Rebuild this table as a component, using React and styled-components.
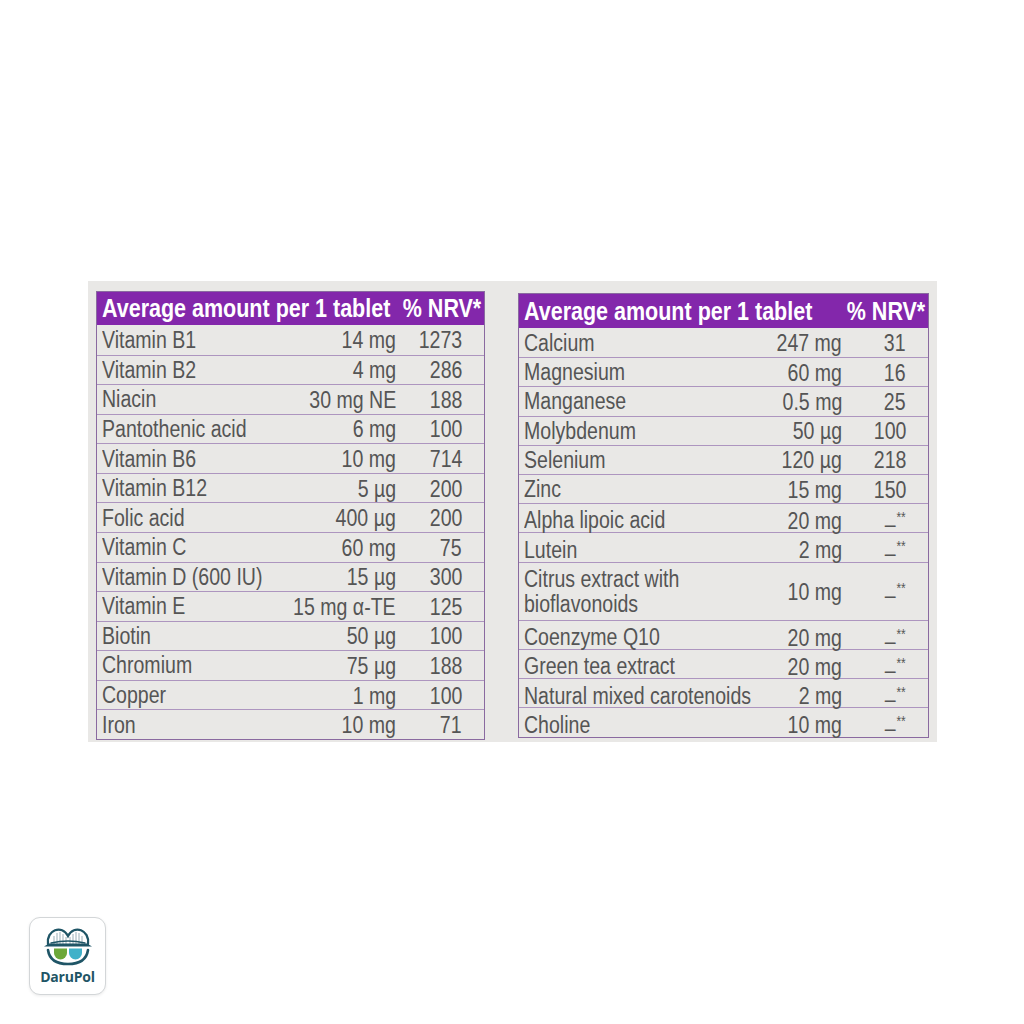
import React from 'react';
import styled, { createGlobalStyle } from 'styled-components';

const GlobalStyle = createGlobalStyle`
	html, body {
		margin: 0;
		padding: 0;
		background: #ffffff;
	}
`;

const colors = {
	panel: '#e9e8e6',
	purple: '#8327ab',
	text: '#555555',
	line: '#ad95bf',
	frame: '#8a6aa0',
	teal: '#1f5566',
};

const left = [
	['Vitamin B1', '14 mg', '1273'],
	['Vitamin B2', '4 mg', '286'],
	['Niacin', '30 mg NE', '188'],
	['Pantothenic acid', '6 mg', '100'],
	['Vitamin B6', '10 mg', '714'],
	['Vitamin B12', '5 µg', '200'],
	['Folic acid', '400 µg', '200'],
	['Vitamin C', '60 mg', '75'],
	['Vitamin D (600 IU)', '15 µg', '300'],
	['Vitamin E', '15 mg α-TE', '125'],
	['Biotin', '50 µg', '100'],
	['Chromium', '75 µg', '188'],
	['Copper', '1 mg', '100'],
	['Iron', '10 mg', '71'],
];

const right = [
	['Calcium', '247 mg', '31'],
	['Magnesium', '60 mg', '16'],
	['Manganese', '0.5 mg', '25'],
	['Molybdenum', '50 µg', '100'],
	['Selenium', '120 µg', '218'],
	['Zinc', '15 mg', '150'],
	['Alpha lipoic acid', '20 mg', null],
	['Lutein', '2 mg', null],
	[['Citrus extract with', 'bioflavonoids'], '10 mg', null],
	['Coenzyme Q10', '20 mg', null],
	['Green tea extract', '20 mg', null],
	['Natural mixed carotenoids', '2 mg', null],
	['Choline', '10 mg', null],
];

const Page = styled.div`
	width: 1024px;
	height: 1024px;
	display: flex;
	flex-direction: column;
	align-items: flex-start;
	padding: 281px 0 0 88px;
	box-sizing: border-box;
	font-family: 'Liberation Sans', Arial, sans-serif;
`;

const Panel = styled.div`
	width: 849px;
	height: 461px;
	box-sizing: border-box;
	background: ${colors.panel};
	display: flex;
	align-items: flex-start;
	gap: 33px;
	padding: 10px 8px 0 8px;
`;

const Table = styled.div`
	width: ${({ $width }) => $width}px;
	margin-top: ${({ $offset }) => $offset || 0}px;
	box-sizing: border-box;
	border: 1.5px solid ${colors.frame};
	display: flex;
	flex-direction: column;
`;

const Head = styled.div`
	height: ${({ $h }) => $h}px;
	background: ${colors.purple};
	color: #ffffff;
	display: grid;
	grid-template-columns: minmax(0, 1fr) auto;
	align-items: center;
	padding: 0 3px 0 5px;
	font-weight: 700;
	font-size: 25px;
	white-space: nowrap;
`;

const HeadRight = styled.span`
	text-align: right;
	width: 0;
	display: flex;
	justify-content: flex-end;
`;

/* condensed look: the page has no narrow face, so squeeze Arial-metric text */
const Narrow = styled.span`
	display: inline-block;
	white-space: nowrap;
	transform: scaleX(${({ $scale }) => $scale || 0.85});
	transform-origin: ${({ $origin }) => $origin || 'left'} center;
`;

const Row = styled.div`
	height: ${({ $h }) => $h}px;
	box-sizing: border-box;
	display: grid;
	grid-template-columns: minmax(0, 1fr) auto ${({ $nrv }) => $nrv}px;
	align-items: center;
	border-top: 1.5px solid ${colors.line};
	color: ${colors.text};
	font-size: 23px;
	line-height: 25px;
	padding-left: 5px;

	&:first-of-type {
		border-top: none;
	}
`;

const Name = styled.span`
	display: flex;
	flex-direction: column;
	padding-top: 1px;
`;

const Amount = styled.span`
	text-align: right;
	white-space: nowrap;
	padding-top: 2px;
`;

const Nrv = styled.span`
	text-align: right;
	padding-right: 22px;
	padding-top: 2px;
	white-space: nowrap;
`;

const Stars = styled.sup`
	font-size: 14px;
	position: relative;
	top: -1px;
	margin-left: 1px;
`;

const Logo = styled.div`
	margin: 175px 0 0 -59px;
	width: 77px;
	height: 78px;
	box-sizing: border-box;
	background: #ffffff;
	border: 1px solid #d3d6d8;
	border-radius: 11px;
	box-shadow: 0 1px 3px rgba(0, 0, 0, 0.08);
	display: flex;
	flex-direction: column;
	align-items: center;
	padding-top: 6px;
`;

const LogoText = styled.div`
	font-family: 'Open Sans', 'Liberation Sans', sans-serif;
	font-weight: 700;
	font-size: 14px;
	color: ${colors.teal};
	margin-top: 1px;
	letter-spacing: -0.2px;
`;

function LogoMark() {
	return (
		<svg width="56" height="42" viewBox="0 0 56 42">
			<g fill="none" stroke="#8fa6b0" strokeWidth="0.9">
				<path d="M14 20 V12 M17 20 V9 M20 20 V8 M23 20 V10 M26 20 V13 M30 20 V13 M33 20 V10 M36 20 V8 M39 20 V9 M42 20 V12" />
			</g>
			<g fill="none" stroke={colors.teal} strokeWidth="2.3" strokeLinecap="round">
				<path d="M8 20 C6 6 22 0 28 12 C34 0 50 6 48 20" />
				<path d="M11 19 Q28 15 45 19" strokeWidth="1.3" />
			</g>
			<path d="M4 22.5 L52 22.5 L47 19.5 L9 19.5 Z" fill={colors.teal} />
			<path d="M14 24.5 H27 V29 A6.5 6.5 0 0 1 14 29 Z" fill="#6da83a" />
			<path d="M29 24.5 H42 V29 A6.5 6.5 0 0 1 29 29 Z" fill="#3fb1c9" />
			<path d="M8 26 Q10 40 28 40 Q46 40 48 26" fill="none" stroke={colors.teal} strokeWidth="2.6" strokeLinecap="round" />
		</svg>
	);
}

function NutrientTable({ rows, width, nrv, headH, offset, heights }) {
	return (
		<Table $width={width} $offset={offset}>
			<Head $h={headH}>
				<span>
					<Narrow $scale={0.86}>Average amount per 1 tablet</Narrow>
				</span>
				<HeadRight>
					<Narrow $scale={0.86} $origin="right">% NRV*</Narrow>
				</HeadRight>
			</Head>
			<div>
				{rows.map(([name, amount, value], i) => {
					const tall = Array.isArray(name);
					return (
						<Row key={i} $h={tall ? heights * 2 : heights} $nrv={nrv}>
							<Name>
								{tall
									? name.map(part => <Narrow key={part}>{part}</Narrow>)
									: <Narrow>{name}</Narrow>}
							</Name>
							<Amount>
								<Narrow $origin="right">{amount}</Narrow>
							</Amount>
							<Nrv>
								<Narrow $origin="right">
									{value === null ? (
										<>
											–<Stars>**</Stars>
										</>
									) : (
										value
									)}
								</Narrow>
							</Nrv>
						</Row>
					);
				})}
			</div>
		</Table>
	);
}

export default function App() {
	return (
		<>
			<GlobalStyle />
			<Page>
				<Panel>
					<NutrientTable rows={left} width={390} nrv={88} headH={33} heights={29.57} />
					<NutrientTable rows={right} width={412} nrv={86} headH={34} heights={29.2} offset={2} />
				</Panel>
				<Logo>
					<LogoMark />
					<LogoText>DaruPol</LogoText>
				</Logo>
			</Page>
		</>
	);
}
